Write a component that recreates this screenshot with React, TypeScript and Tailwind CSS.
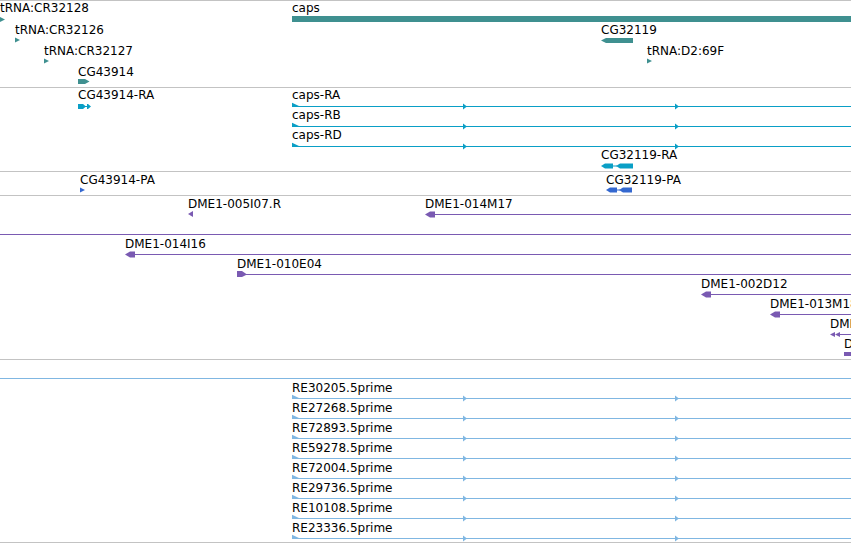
import React from "react";

const W = 851;
const TEAL = "#3f9090";
const CYAN = "#0a9fc6";
const BLUE = "#3468d0";
const PURPLE = "#7a5ab2";
const LIGHT = "#80b7e2";

type Label = { x: number; y: number; t: string };

function Track({
  top,
  h,
  labels,
  children,
  className,
}: {
  top: number;
  h: number;
  labels: Label[];
  children: React.ReactNode;
  className: string;
}) {
  const y0 = top + 1;
  return (
    <div className={className}>
      <svg
        className="absolute left-0 top-0"
        width={W}
        height={h}
        viewBox={`0 ${y0} ${W} ${h}`}
      >
        {children}
      </svg>
      {labels.map((l, i) => (
        <div
          key={i}
          className="absolute whitespace-nowrap text-[12px] leading-[14px] text-black"
          style={{ left: l.x, top: l.y - y0 }}
        >
          {l.t}
        </div>
      ))}
    </div>
  );
}

const P = (pts: number[][], fill: string, key?: string | number) => (
  <polygon key={key} points={pts.map((p) => p.join(",")).join(" ")} fill={fill} />
);

const Line = (x: number, y: number, fill: string, key?: string | number) => (
  <rect key={key} x={x} y={y} width={W - x} height={1} fill={fill} shapeRendering="crispEdges" />
);

const TriR = (x: number, cy: number, fill: string, w = 5, h = 5) =>
  P([[x, cy - h / 2], [x + w, cy], [x, cy + h / 2]], fill);

// transcript with start flag and small mid arrows
const Transcript = (x: number, L: number, fill: string, key: number) => (
  <g key={key}>
    {Line(x, L, fill)}
    {P([[x, L - 3.3], [x + 8, L + 0.5], [x + 8, L + 1], [x, L + 1]], fill)}
    {P([[463, L - 2.5], [467, L + 0.5], [463, L + 3.5]], fill)}
    {P([[675, L - 2.5], [679, L + 0.5], [675, L + 3.5]], fill)}
  </g>
);

// left-pointing arrowhead with block, then line
const PurpleL = (x: number, L: number, key: number) => (
  <g key={key}>
    {Line(x + 8, L, PURPLE)}
    {P([[x, L + 0.5], [x + 5, L - 2.5], [x + 10, L - 2.5], [x + 10, L + 3.5], [x + 5, L + 3.5]], PURPLE)}
  </g>
);

const REs = [
  "RE30205.5prime",
  "RE27268.5prime",
  "RE72893.5prime",
  "RE59278.5prime",
  "RE72004.5prime",
  "RE29736.5prime",
  "RE10108.5prime",
  "RE23336.5prime",
];

export default function App() {
  return (
    <div className="w-[851px] h-[543px] overflow-hidden bg-white font-['DejaVu_Sans',sans-serif]">
      {/* Track 1: genes */}
      <Track
        className="relative h-[87px] border-t border-[#c3c3c3]"
        top={0}
        h={86}
        labels={[
          { x: 0, y: 1, t: "tRNA:CR32128" },
          { x: 15, y: 23, t: "tRNA:CR32126" },
          { x: 44, y: 44, t: "tRNA:CR32127" },
          { x: 78, y: 65, t: "CG43914" },
          { x: 292, y: 1, t: "caps" },
          { x: 601, y: 23, t: "CG32119" },
          { x: 647, y: 44, t: "tRNA:D2:69F" },
        ]}
      >
        {TriR(0, 19.5, TEAL)}
        {TriR(15, 40, TEAL)}
        {TriR(44, 61, TEAL)}
        {TriR(647, 61, TEAL)}
        {P([[78, 79], [85, 79], [89.5, 81.5], [85, 84], [78, 84]], TEAL)}
        <rect x={292} y={16} width={W - 292} height={6} fill={TEAL} shapeRendering="crispEdges" />
        {P([[601, 40.5], [606, 38], [633, 38], [633, 43], [606, 43]], TEAL)}
      </Track>

      {/* Track 2: transcripts */}
      <Track
        className="relative h-[84px] border-t border-[#c3c3c3]"
        top={87}
        h={83}
        labels={[
          { x: 78, y: 88, t: "CG43914-RA" },
          { x: 292, y: 88, t: "caps-RA" },
          { x: 292, y: 108, t: "caps-RB" },
          { x: 292, y: 128, t: "caps-RD" },
          { x: 601, y: 148, t: "CG32119-RA" },
        ]}
      >
        {[106, 126, 146].map((L, i) => Transcript(292, L, CYAN, i))}
        {P([[78, 104], [83, 104], [86, 106.5], [83, 109], [78, 109]], CYAN)}
        <rect x={85} y={106} width={3} height={1} fill={CYAN} />
        {P([[87, 104], [88, 104], [91, 106.5], [88, 109], [87, 109]], CYAN)}
        {P([[601, 166], [605, 163.5], [613, 163.5], [613, 168.5], [605, 168.5]], CYAN)}
        <rect x={612} y={165.5} width={5} height={1} fill={CYAN} />
        {P([[616, 166], [620, 163.5], [633, 163.5], [633, 168.5], [620, 168.5]], CYAN)}
      </Track>

      {/* Track 3: proteins */}
      <Track
        className="relative h-[24px] border-t border-[#c3c3c3]"
        top={171}
        h={23}
        labels={[
          { x: 80, y: 173, t: "CG43914-PA" },
          { x: 606, y: 173, t: "CG32119-PA" },
        ]}
      >
        {TriR(80, 190, BLUE)}
        {P([[606, 190], [610, 187.5], [617, 187.5], [617, 192.5], [610, 192.5]], BLUE)}
        <rect x={616} y={189.5} width={4} height={1} fill={BLUE} />
        {P([[619, 190], [623, 187.5], [632, 187.5], [632, 192.5], [623, 192.5]], BLUE)}
      </Track>

      {/* Track 4: BAC ends */}
      <Track
        className="relative h-[164px] border-t border-[#c3c3c3]"
        top={195}
        h={163}
        labels={[
          { x: 188, y: 197, t: "DME1-005I07.R" },
          { x: 425, y: 197, t: "DME1-014M17" },
          { x: 125, y: 237, t: "DME1-014I16" },
          { x: 237, y: 257, t: "DME1-010E04" },
          { x: 701, y: 277, t: "DME1-002D12" },
          { x: 770, y: 297, t: "DME1-013M18" },
          { x: 830, y: 317, t: "DME1-011B04" },
          { x: 844, y: 337, t: "DME1-002A05" },
        ]}
      >
        {P([[188, 214], [193, 211], [193, 217]], PURPLE)}
        {PurpleL(425, 214, 1)}
        {Line(0, 234, PURPLE)}
        {PurpleL(125, 254, 2)}
        {Line(245, 274, PURPLE)}
        {P([[237, 271], [242, 271], [247, 274.5], [242, 277], [237, 277]], PURPLE)}
        {PurpleL(701, 294, 3)}
        {PurpleL(770, 314, 4)}
        {P([[830, 334.5], [835, 332], [835, 337]], PURPLE)}
        {P([[835, 334.5], [840, 332], [840, 337]], PURPLE)}
        {Line(839, 334, PURPLE)}
        <rect x={844} y={352} width={7} height={4} fill={PURPLE} shapeRendering="crispEdges" />
      </Track>

      {/* Track 5: ESTs */}
      <Track
        className="relative h-[184px] border-y border-[#c3c3c3]"
        top={359}
        h={182}
        labels={REs.map((t, i) => ({ x: 292, y: 381 + i * 20, t }))}
      >
        {Line(0, 378, LIGHT)}
        {REs.map((_, i) => Transcript(292, 398 + i * 20, LIGHT, i))}
      </Track>
    </div>
  );
}
